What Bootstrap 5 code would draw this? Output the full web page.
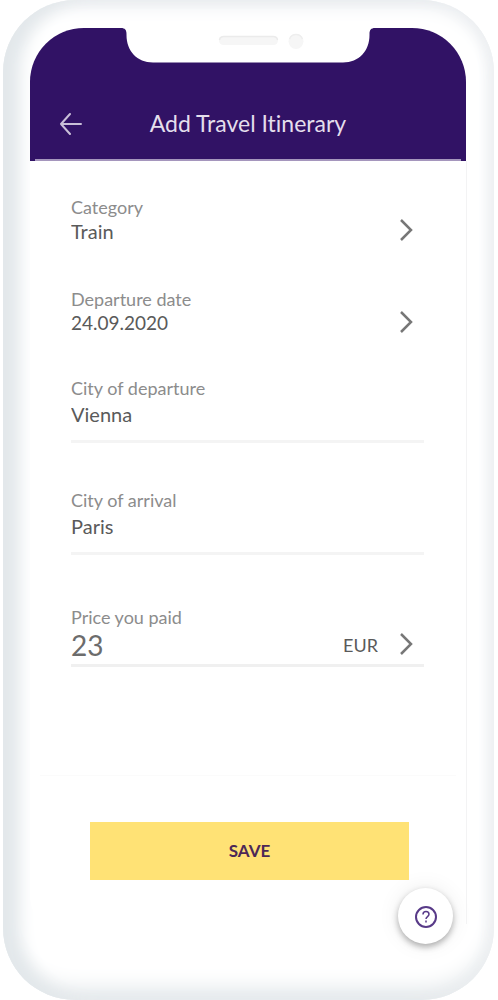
<!DOCTYPE html>
<html lang="en">
<head>
<meta charset="utf-8">
<meta name="viewport" content="width=device-width, initial-scale=1">
<title>Add Travel Itinerary</title>
<link href="https://cdn.jsdelivr.net/npm/bootstrap@5.3.0/dist/css/bootstrap.min.css" rel="stylesheet">
<style>
  body { font-family: Lato, "Liberation Sans", sans-serif; font-variant-ligatures: none; background: #fff; }
  /* phone shell */
  .phone {
    min-height: 100vh; margin: 0 4px 0 3px; padding: 28px 28px 28px 27px;
    border-radius: 72px; background: #fff;
    box-shadow: inset 21px 0 16px -4px #e3e8eb, inset -6px 0 16px -3px #eef0f2,
      inset 0 -16px 22px -5px #e1e6e9, inset 0 8px 20px -4px #e6e9ed;
  }
  .screen { border-radius: 54px 54px 50px 50px; background: #fff; }
  .topbar {
    height: 133px; padding: 0 29px 23px; background: #311265; color: #e4deec;
    border-radius: 54px 54px 0 0;
  }
  .topbar::after { content: ""; position: absolute; left: 5px; right: 5px; bottom: 0; height: 2px; background: #a596bd; }
  .notch { top: 0; left: 0; right: 0; }
  .topbar h1 { font-size: 23px; line-height: 30px; }
  .icon-btn { width: 24px; height: 30px; }
  .screen-body::after { content: ""; position: absolute; top: 0; right: -1px; bottom: 20px; width: 1px; background: #f3f3f4; }
  .content-area { padding: 34px 42px 0 41px; }
  .field-label { font-size: 18px; line-height: 24px; color: #8c8c8c; }
  .field-value, .field-value:focus {
    font-size: 20px; line-height: 24px; height: 24px; color: #5a5a5a; background: transparent;
    appearance: none; outline: 0; min-width: 0;
  }
  .field-value.date-value { font-size: 19px; }
  .field-value.amount { font-size: 28px; line-height: 32px; height: 32px; color: #6c6c6c; flex: 1 1 0; }
  .field-value.currency { font-size: 18px; margin-right: 21px; flex: none; }
  .pick-row { margin-bottom: 44px; }
  .pick-row.last-pick { margin-bottom: 41px; }
  .chev { width: 14px; height: 24px; margin-right: 11px; flex: none; }
  .text-row { border-bottom: 3px solid #f4f4f4; padding-bottom: 14px; margin-bottom: 45px; }
  .text-row .field-label { margin-bottom: 2px; }
  .price-row { border-bottom: 3px solid #f0f0f0; margin: 50px 0 0; padding-bottom: 3px; }
  .actions { margin-top: 108px; padding: 47px 57px 0 60px; }
  .actions::before { content: ""; position: absolute; left: 10px; right: 10px; top: 0; height: 1px; background: #fbfbfb; }
  .save-btn, .save-btn:hover { height: 58px; background: #ffe275; color: #4c2857; font-size: 17px; font-weight: 700; border-radius: 0; border: 0; }
  .help-row { padding: 8px 13px 0; }
  .help-btn { width: 55px; height: 56px; background: #fff; box-shadow: 0 3px 6px rgba(0,0,0,.3), 0 0 22px rgba(0,0,0,.08); }
</style>
</head>
<body>
<main class="phone">
  <div class="screen">
    <header class="topbar position-relative d-flex align-items-end">
      <div class="notch position-absolute d-flex justify-content-center" aria-hidden="true">
        <svg width="254" height="35" viewBox="0 0 254 35">
          <path d="M0 0C4 0 5.500 2 5.500 6V7C5.500 23 16 34.500 32 34.500H222C238 34.500 248.500 23 248.500 7V6C248.500 2 250 0 254 0Z" fill="#fff"/>
          <rect x="98" y="8" width="59" height="9" rx="4.500" fill="#f6f6f6"/>
          <path d="M98.500 12Q99 8.500 103 8.500H152Q156 8.500 156.500 12" fill="none" stroke="#ebebeb" stroke-width="1.500"/>
          <circle cx="175" cy="13.500" r="7.500" fill="#f6f6f6"/>
          <path d="M168.500 11A7 7 0 0 1 181.500 11" fill="none" stroke="#eee" stroke-width="1.500"/>
        </svg>
      </div>
      <button type="button" class="icon-btn btn p-0 border-0 d-flex align-items-center" aria-label="Back">
        <svg width="24" height="24" viewBox="0 0 24 24" fill="none" stroke="#c9bfd8" stroke-width="2" stroke-linecap="round" stroke-linejoin="round"><path d="M22 13H2M11 3L2 13L11 23"/></svg>
      </button>
      <h1 class="flex-fill text-center fw-normal mb-0">Add Travel Itinerary</h1>
      <span class="icon-btn"></span>
    </header>

    <div class="screen-body position-relative">
      <form>
        <div class="content-area">
          <div class="pick-row">
            <label class="field-label d-block" for="category">Category</label>
            <div class="d-flex align-items-center">
              <select class="field-value border-0 p-0 flex-fill" id="category"><option>Train</option></select>
              <svg class="chev" viewBox="0 0 14 24" fill="none" stroke="#777" stroke-width="2.500"><path d="M2 1L12 11L2 21"/></svg>
            </div>
          </div>
          <div class="pick-row last-pick">
            <label class="field-label d-block" for="date">Departure date</label>
            <div class="d-flex align-items-center">
              <input class="field-value date-value border-0 p-0 flex-fill" id="date" type="text" value="24.09.2020">
              <svg class="chev" viewBox="0 0 14 24" fill="none" stroke="#777" stroke-width="2.500"><path d="M2 1L12 11L2 21"/></svg>
            </div>
          </div>
          <div class="text-row">
            <label class="field-label d-block" for="from">City of departure</label>
            <input class="field-value border-0 p-0 w-100 d-block" id="from" type="text" value="Vienna">
          </div>
          <div class="text-row">
            <label class="field-label d-block" for="to">City of arrival</label>
            <input class="field-value border-0 p-0 w-100 d-block" id="to" type="text" value="Paris">
          </div>
          <div class="price-row">
            <label class="field-label d-block" for="price">Price you paid</label>
            <div class="d-flex align-items-center">
              <input class="field-value amount border-0 p-0" id="price" type="text" inputmode="decimal" value="23">
              <select class="field-value currency border-0 p-0" aria-label="Currency"><option>EUR</option></select>
              <svg class="chev" viewBox="0 0 14 24" fill="none" stroke="#777" stroke-width="2.500"><path d="M2 1L12 11L2 21"/></svg>
            </div>
          </div>
        </div>
        <div class="actions position-relative">
          <button type="submit" class="save-btn btn w-100">SAVE</button>
        </div>
      </form>
      <div class="help-row d-flex justify-content-end">
        <button type="button" class="help-btn btn rounded-circle border-0 p-0 d-flex align-items-center justify-content-center" aria-label="Help">
          <svg width="24" height="24" viewBox="0 0 24 24" fill="none" stroke="#583a88"><circle cx="12" cy="13" r="10" stroke-width="2"/><path d="M9 10.500C9 8.500 10.300 7.500 12 7.500S15 8.500 15 10.300C15 12.500 12 12.700 12 15" stroke-width="1.500"/><path d="M12 16.500V18.500" stroke-width="1.500"/></svg>
        </button>
      </div>
    </div>
  </div>
</main>
<script src="https://cdn.jsdelivr.net/npm/bootstrap@5.3.0/dist/js/bootstrap.bundle.min.js"></script>
</body>
</html>
